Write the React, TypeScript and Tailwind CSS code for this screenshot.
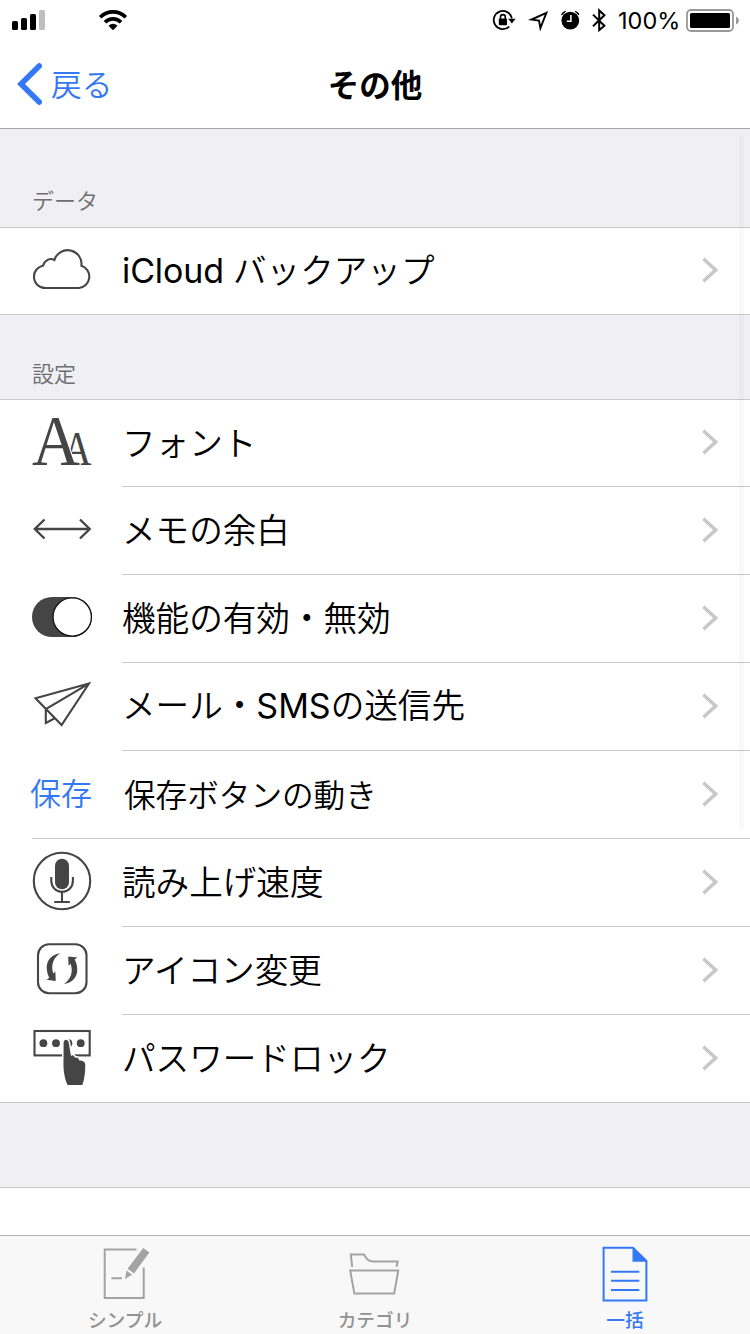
import type { ReactNode } from "react";

const INK = "#454545";
const BLUE = "#3478f6";

function Chevron() {
  return (
    <svg width="18" height="28" viewBox="0 0 18 28" className="mb-[2px] mr-[31px] shrink-0" fill="none" stroke="#c7c7cc" strokeWidth="3.6">
      <path d="M2.4 2.7 L14.6 14 L2.4 25.3" />
    </svg>
  );
}

type RowProps = {
  icon: ReactNode;
  children: ReactNode;
  divider?: "inset" | "wide" | "none";
  first?: boolean;
};

function Row({ icon, children, divider = "inset", first = false }: RowProps) {
  return (
    <div className={first ? "flex h-[87px] flex-col" : "flex h-[88px] flex-col"}>
      <div className="flex min-h-0 flex-1 items-center">
        <div className="flex h-full w-[122px] shrink-0 items-start">{icon}</div>
        <div className="flex-1 whitespace-nowrap pb-[3px] text-[33.6px] leading-[50px] text-black">{children}</div>
        <Chevron />
      </div>
      {divider === "inset" && <div className="ml-[122px] h-px bg-[#c8c7cc]" />}
      {divider === "wide" && <div className="ml-8 h-px bg-[#c8c7cc]" />}
      {divider === "none" && <div className="h-px bg-[#c8c7cc]" />}
    </div>
  );
}

function RowIcon({ top, children }: { top: number; children: ReactNode }) {
  return (
    <svg width="122" height="86" viewBox={`0 ${top} 122 86`} className="shrink-0" fill="none" stroke={INK} strokeWidth="2.1">
      {children}
    </svg>
  );
}

function StatusBar() {
  return (
    <div className="flex h-10 items-center">
      <svg width="490" height="40" viewBox="0 0 490 40" className="shrink-0">
        <rect x="12" y="21" width="6" height="9" rx="1.6" />
        <rect x="21" y="18" width="6" height="12" rx="1.6" />
        <rect x="30" y="14" width="6" height="16" rx="1.6" />
        <rect x="39" y="10" width="6" height="20" rx="1.6" fill="#bfbfbf" />
        <g fill="none" stroke="#000" strokeWidth="3.7">
          <path d="M100.2 17.2 A18.2 18.2 0 0 1 125.8 17.2" />
          <path d="M105 22.2 A11.3 11.3 0 0 1 121 22.2" />
        </g>
        <path d="M108.5 25.8 Q113 21.8 117.5 25.8 L113 30.2 Z" />
      </svg>
      <svg width="128" height="40" viewBox="490 0 128 40" className="shrink-0">
        <path d="M511.8 18.4 A9.1 9.1 0 1 0 509.2 26.6" fill="none" stroke="#000" strokeWidth="1.8" />
        <path d="M508.2 18.8 H515.6 L511.9 23.6 Z" />
        <rect x="498.8" y="18.6" width="8.2" height="6.6" rx="0.8" />
        <path d="M500.5 19 V17 A2.4 2.4 0 0 1 505.3 17 V19" fill="none" stroke="#000" strokeWidth="1.6" />
        <path d="M546.4 12.8 L531.4 19.6 L539 20.6 L540.4 28 Z" fill="none" stroke="#000" strokeWidth="1.9" />
        <circle cx="570.3" cy="20.6" r="8.9" />
        <path d="M570.9 15 V21.2 H566.8" fill="none" stroke="#fff" strokeWidth="1.5" />
        <path d="M561.6 15 Q562 12 565.5 11.4 Z M579 15 Q578.6 12 575.1 11.4 Z" stroke="#000" strokeWidth="1" />
        <path d="M593 14.6 L604.4 25.8 L599.2 30.2 V10.4 L604.4 15.2 L593 26.2" fill="none" stroke="#000" strokeWidth="2" />
      </svg>
      <span className="w-[68px] shrink-0 pt-[2px] font-[Inter] text-[23.5px] leading-[38px]">100%</span>
      <svg width="58" height="40" viewBox="686 0 58 40" className="shrink-0">
        <rect x="687" y="10" width="46" height="21" rx="4" fill="none" stroke="#999" strokeWidth="1.8" />
        <rect x="690" y="13" width="40" height="15" rx="1.5" />
        <path d="M736 16.5 Q739 18 739 20.5 Q739 23 736 24.5 Z" fill="#999" />
      </svg>
    </div>
  );
}

function Tab({ icon, label, active = false }: { icon: ReactNode; label: string; active?: boolean }) {
  return (
    <div className={active ? "flex w-[250px] flex-col items-center text-[#3478f6]" : "flex w-[250px] flex-col items-center text-[#929292]"}>
      {icon}
      <span className="-mt-[3px] text-[18.7px] font-medium leading-[28px]">{label}</span>
    </div>
  );
}

export default function App() {
  return (
    <div className="relative flex h-[1334px] w-[750px] flex-col overflow-hidden bg-[#efeff4] font-['Noto_Sans_CJK_JP',sans-serif] text-black">
      <header className="h-[129px] shrink-0 border-b border-[#a7a7aa] bg-white">
        <StatusBar />
        <div className="grid h-[88px] grid-cols-3 items-center">
          <div className="flex items-center">
            <svg width="51" height="88" viewBox="0 40 51 88" fill="none" stroke={BLUE} strokeWidth="5.6" strokeLinecap="round" strokeLinejoin="miter">
              <path d="M39.2 66 L21 84 L39.2 102" />
            </svg>
            <span className="pb-[3px] text-[30.7px] font-[350] leading-[44px] text-[#3478f6]">戻る</span>
          </div>
          <h1 className="pb-[3px] text-center text-[31.5px] font-bold leading-[44px]">その他</h1>
        </div>
      </header>

      <h2 className="flex h-[98px] shrink-0 items-end pb-[12px] pl-8 text-[22px] font-[350] leading-8 text-[#6d6d72]">データ</h2>
      <section className="shrink-0 border-t border-[#c8c7cc] bg-white font-[350]">
        <Row
          first
          divider="none"
          icon={
            <RowIcon top={228}>
              <path d="M45.5 288 H79 A11.4 11.4 0 0 0 81.4 265.8 A13.85 13.85 0 0 0 54.4 260 C50 257.5 44.5 260.5 43.2 265.5 C36.5 267.5 34 272.5 34 276.8 C34 283.5 39.5 288 45.5 288 Z" />
            </RowIcon>
          }
        >
          <span className="font-[Inter] text-[34px] font-normal tracking-[-0.1px]">iCloud</span>
          <span className="ml-[9px]">バックアップ</span>
        </Row>
      </section>

      <h2 className="flex h-[84px] shrink-0 items-end pb-[11px] pl-8 text-[22px] font-[350] leading-8 text-[#6d6d72]">設定</h2>
      <section className="shrink-0 border-t border-[#c8c7cc] bg-white font-[350]">
        <Row
          first
          icon={
            <RowIcon top={400}>
              <g fontFamily="Liberation Serif, serif" fill={INK}>
                <text x="63" y="464.5" fontSize="48" stroke="none" textLength="28.5" lengthAdjust="spacingAndGlyphs">A</text>
                <text x="32" y="464.5" fontSize="71.5" stroke="#fff" strokeWidth="2.4" paintOrder="stroke" textLength="48" lengthAdjust="spacingAndGlyphs">A</text>
              </g>
            </RowIcon>
          }
        >
          フォント
        </Row>
        <Row
          icon={
            <RowIcon top={487}>
              <path d="M35 529 H89.5 M44.5 519.5 L34.8 529 L44.5 538.5 M80 519.5 L89.7 529 L80 538.5" strokeWidth="2.4" />
            </RowIcon>
          }
        >
          メモの余白
        </Row>
        <Row
          icon={
            <RowIcon top={575}>
              <rect x="32" y="597" width="60" height="40" rx="20" fill={INK} stroke="none" />
              <circle cx="72.2" cy="617" r="19.2" fill="#fff" stroke="#111" strokeWidth="1.3" />
            </RowIcon>
          }
        >
          機能の有効・無効
        </Row>
        <Row
          icon={
            <RowIcon top={663}>
              <path d="M89 683.6 L35.5 698.3 L61.6 725 Z M89 683.6 L45.8 709.2 V723 L54.4 718.5" />
            </RowIcon>
          }
        >
          メール・<span className="font-[Inter] text-[34px] font-normal">SMS</span>の送信先
        </Row>
        <Row divider="wide" icon={<span className="ml-[30px] mt-[18px] whitespace-nowrap text-[31px] leading-[46px] text-[#3478f6]">保存</span>}>
          <span className="ml-[2px] text-[31.6px]">保存ボタンの動き</span>
        </Row>
        <Row
          icon={
            <RowIcon top={839}>
              <circle cx="62" cy="881" r="28.2" />
              <rect x="55" y="858.7" width="14" height="30.6" rx="7" fill={INK} stroke="none" />
              <path d="M51.3 877 V881 A10.8 10.8 0 0 0 72.9 881 V877 M62 892 V902" />
              <path d="M55 902 H69" strokeWidth="2.2" strokeLinecap="round" />
            </RowIcon>
          }
        >
          読み上げ速度
        </Row>
        <Row
          icon={
            <RowIcon top={927}>
              <rect x="38" y="944.2" width="48.5" height="49" rx="11" />
              <g fill={INK} stroke="none">
                <path d="M60.4 953.3 C50 954.5 46.2 962 46.8 969 C47 972.5 48 975.4 49.3 977.8 L46.6 979.8 L55.7 981 L55.4 971.6 L53.4 973.6 C50.6 966 53 957.5 60.4 953.3 Z" />
                <path d="M63.8 984 C74 982.5 77.8 975.5 77.2 968.5 C77 965 76 962 74.7 959.6 L77.3 957.6 L68.2 956.4 L68.6 965.8 L70.6 963.8 C73.4 971.5 71 979.7 63.8 984 Z" />
              </g>
            </RowIcon>
          }
        >
          アイコン変更
        </Row>
        <Row
          divider="none"
          icon={
            <RowIcon top={1015}>
              <rect x="34.5" y="1031" width="55.2" height="24.4" />
              <g fill={INK} stroke="none">
                <circle cx="43.4" cy="1043.2" r="3.9" />
                <circle cx="56" cy="1043.2" r="3.9" />
                <circle cx="68.4" cy="1043.2" r="3.9" />
                <circle cx="80.7" cy="1043.2" r="3.9" />
              </g>
              <path
                d="M67.6 1084.9 C64.5 1079 63.2 1070 63.5 1061 L63.6 1042.8 C63.8 1038.9 68 1038.9 68.7 1042.6 L71 1056 C72.4 1054.4 74.4 1055.3 74.8 1057.8 C76.8 1056.9 78.8 1058 79.2 1060.6 C81.4 1060 85 1061.4 85.2 1064 C85.6 1071 84.5 1079 82.4 1084.9 Z"
                fill={INK}
                stroke="#fff"
                strokeWidth="3"
                paintOrder="stroke"
              />
            </RowIcon>
          }
        >
          パスワードロック
        </Row>
      </section>

      <div className="h-[84px] shrink-0" />
      <section className="h-12 shrink-0 border-t border-[#c8c7cc] bg-white" />

      <nav className="flex h-[99px] shrink-0 border-t border-[#b2b2b2] bg-[#f8f8f8]">
        <Tab
          label="シンプル"
          icon={
            <svg width="250" height="72" viewBox="0 1236 250 72" fill="none" stroke="#a3a3a3" strokeWidth="2">
              <path d="M136.5 1249.6 H104.7 V1298 H143.7 V1267.5 M111.4 1278.3 H122" />
              <path d="M143.2 1248 L149.4 1252.4 L134 1273.4 L127.6 1268.7 Z M126.6 1270.6 L132 1274.8 L125 1279 Z" fill="#a3a3a3" stroke="none" />
            </svg>
          }
        />
        <Tab
          label="カテゴリ"
          icon={
            <svg width="250" height="72" viewBox="250 1236 250 72" fill="none" stroke="#a3a3a3" strokeWidth="2">
              <path d="M352.2 1267 L350.8 1254.4 H364 C366 1259 368.5 1261.6 373.5 1261.6 H397.6 L396.6 1266.8 M350.2 1270.6 H398.2 L394.2 1293.6 H354.4 Z" />
            </svg>
          }
        />
        <Tab
          active
          label="一括"
          icon={
            <svg width="250" height="72" viewBox="500 1236 250 72" fill="none" stroke={BLUE} strokeWidth="2">
              <path d="M633 1247.8 H603.6 V1300.6 H646.4 V1261 Z M611 1271.8 H639.3 M611 1280.8 H639.3 M611 1290 H639.3" />
              <path d="M632.5 1247 L647.4 1261.7 H632.5 Z" fill={BLUE} stroke="none" />
            </svg>
          }
        />
      </nav>

      <div className="absolute left-[739px] top-[134px] h-[696px] w-[5px] rounded-full bg-black/[0.025]" />
    </div>
  );
}
